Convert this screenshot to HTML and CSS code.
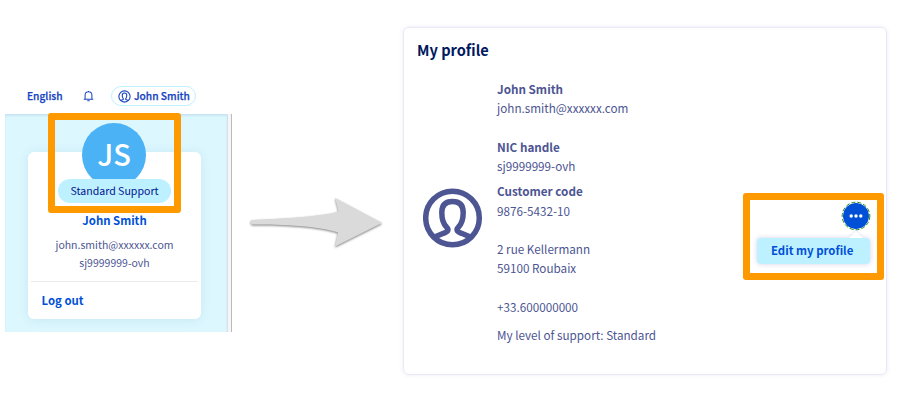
FILE: index.html
```html
<!DOCTYPE html>
<html lang="en">
<head>
<meta charset="utf-8">
<title>My profile</title>
<link rel="stylesheet" href="styles.css">
</head>
<body>
<main class="page">
  <section class="account">
    <header class="topbar">
      <span class="lang">English</span>
      <svg class="bell" viewBox="0 0 12 12"><path d="M.8 9.500h10.400M2.300 9.300V5a3.700 3.700 0 0 1 7.400 0v4.300M6 1.500V.5M4.700 11.300h2.600"/></svg>
      <span class="user"><svg class="user-icon" viewBox="0 0 60 60"><circle cx="30" cy="30" r="26"/><path d="M12 49l9-3.700q6-2.500 3-6C20 35 19.500 31 19.500 24.500C19.500 17 23 13.500 30 13.500S40.500 17 40.500 24.500C40.500 31 40 35 36 39.500q-3 3.500 3 5.800l9 3.700"/></svg><span class="user-name">John Smith</span></span>
    </header>
    <div class="sidebar">
      <div class="sidebar-body">
        <div class="card">
          <div class="avatar">JS</div>
          <div class="badge"><span class="badge-text">Standard Support</span></div>
          <div class="card-name"><span>John Smith</span></div>
          <div class="card-line"><span>john.smith@xxxxxx.com</span></div>
          <div class="card-line"><span>sj9999999-ovh</span></div>
          <div class="logout"><span>Log out</span></div>
        </div>
      </div>
      <div class="scroll"></div>
    </div>
    <div class="highlight highlight-support"></div>
  </section>
  <svg class="arrow" viewBox="0 0 140 60"><path d="M6 27.500Q5 30 7 31.500C40 31.500 72 33 93 39.500L90 53.500L137 30L90 5L93.500 18Q90 20 80 21.500Q55 25 7 27Z"/></svg>
  <section class="profile">
    <h1><span>My profile</span></h1>
    <div class="profile-body">
      <svg class="profile-icon" viewBox="0 0 60 60"><circle cx="29.500" cy="30" r="26.800"/><path d="M11.500 49l9-3.700q7-2.500 3-6.300C19.500 35 18.800 31 18.800 24.500C18.800 17 22.500 13.500 29.500 13.500S40.200 17 40.200 24.500C40.200 31 39.500 35 35.500 39q-4 3.800 3 6.300l9 3.700"/></svg>
      <div class="details">
        <p class="strong"><span>John Smith</span></p>
        <p class="gap-lg"><span>john.smith@xxxxxx.com</span></p>
        <p class="strong"><span>NIC handle</span></p>
        <p class="gap-sm"><span>sj9999999-ovh</span></p>
        <p class="strong code"><span>Customer code</span></p>
        <p class="gap-lg"><span>9876-5432-10</span></p>
        <p><span>2 rue Kellermann</span></p>
        <p class="gap-lg"><span>59100 Roubaix</span></p>
        <p class="gap-md"><span>+33.600000000</span></p>
        <p><span>My level of support: Standard</span></p>
      </div>
    </div>
    <div class="highlight highlight-edit">
      <svg class="more" viewBox="0 0 30 30"><circle class="more-disc" cx="15" cy="15" r="13"/><circle class="more-gap" cx="15" cy="15" r="13.800"/><circle class="more-ring" cx="15" cy="15" r="13.800"/><g class="more-dots"><circle cx="10.200" cy="15" r="1.700"/><circle cx="15" cy="15" r="1.700"/><circle cx="19.800" cy="15" r="1.700"/></g></svg>
      <div class="menu"><span>Edit my profile</span></div>
    </div>
  </section>
</main>
</body>
</html>
```
FILE: styles.css
```css
* { box-sizing: border-box; }
body {
  margin: 0;
  background: #fff;
  font-family: "Noto Sans CJK SC", "Noto Sans", sans-serif;
  font-size: 11.7px;
  color: #4d5592;
}
p, h1 { margin: 0; }
span { white-space: nowrap; }
.page { display: flex; width: 900px; height: 400px; overflow: hidden; }
.account { position: relative; width: 227px; margin: 78px 0 0 5px; flex: none; }
.topbar {
  display: flex;
  align-items: center;
  height: 36px;
  padding-left: 22px;
  color: #1643c0;
  font-size: 10.2px;
  line-height: 16px;
  font-weight: 500;
  -webkit-text-stroke: .25px #1643c0;
}
.lang { width: 56px; padding-bottom: 1px; }
.user-name { padding-bottom: 1px; }
.bell { width: 11px; height: 12px; fill: none; stroke: #1643c0; stroke-width: 1.1; }
.user {
  display: flex;
  align-items: center;
  gap: 3px;
  width: 85px;
  height: 20px;
  margin-left: 17px;
  padding-left: 6px;
  border: 1px solid #bef1ff;
  border-radius: 10px;
}
.user-icon { width: 13px; height: 13px; flex: none; fill: none; stroke: #1643c0; stroke-width: 5; }
.sidebar { display: flex; height: 218px; }
.sidebar-body {
  width: 222px;
  padding: 38px 0 0 23px;
  background: #dcf7fe;
  box-shadow: inset 0 2px 2px rgba(0, 60, 130, .09);
}
.scroll { width: 5px; background: #f5f6f7; border-left: 1px solid #d9dfe2; border-right: 1px solid #bbb; }
.card {
  display: flex;
  flex-direction: column;
  align-items: center;
  width: 173px;
  height: 167px;
  background: #fff;
  border-radius: 6px;
  box-shadow: 0 1px 12px rgba(0, 80, 130, .09);
  font-size: 10.5px;
  line-height: 18px;
}
.avatar {
  flex: none;
  width: 64px;
  height: 64px;
  margin: -29px 1px 0 0;
  border-radius: 50%;
  background: #4bb2f6;
  color: #fff;
  font-size: 29px;
  font-weight: 500;
  line-height: 61px;
  text-align: center;
}
.badge {
  z-index: 1;
  width: 113px;
  height: 24px;
  margin-top: -8px;
  border-radius: 12px;
  background: #bef1ff;
  color: #00138e;
  font-size: 10.6px;
  line-height: 24px;
  text-align: center;
}
.card-name { margin: 8px 0 7px; color: #0050d7; font-size: 11.4px; font-weight: 700; }
.logout {
  width: 167px;
  margin-top: 9px;
  padding: 9px 0 0 10.5px;
  border-top: 1px solid #ebebeb;
  color: #0050d7;
  font-size: 11.4px;
  font-weight: 700;
}
.highlight { position: absolute; border: 7px solid #ff9900; border-radius: 3px; }
.highlight-support { z-index: 2; left: 43px; top: 35px; width: 133px; height: 100px; }
.arrow { width: 140px; height: 60px; margin: 193px 0 0 13px; flex: none; fill: #dadada; filter: drop-shadow(0 1px 1px rgba(0, 0, 0, .5)); }
.profile {
  position: relative;
  flex: none;
  width: 484px;
  height: 348px;
  margin: 27px 0 0 18px;
  padding: 13px 14px 14px 13px;
  border: 1px solid #e9e9f6;
  border-radius: 6px;
  box-shadow: 0 0 4px rgba(80, 80, 180, .1);
}
h1 { color: #00185e; font-size: 14.6px; line-height: 18px; font-weight: 700; }
.profile-body { display: flex; gap: 14px; padding: 20px 0 0 6px; }
.profile-icon { width: 60px; height: 60px; margin-top: 109px; fill: none; stroke: #4d5592; stroke-width: 5.5; }
.details { line-height: 19px; }
.strong { font-weight: 700; }
.code { margin-bottom: 1px; }
.code + .gap-lg { margin-bottom: 19px; }
.gap-lg { margin-bottom: 20px; }
.gap-md { margin-bottom: 9px; }
.gap-sm { margin-bottom: 6px; }
.highlight-edit {
  left: 339px;
  top: 165px;
  width: 141px;
  height: 87px;
  padding: 1px 6px 0 7px;
}
.more { display: block; width: 30px; height: 30px; margin-left: 84px; }
.more-disc { fill: #0050d7; }
.more-gap { fill: none; stroke: #fff; stroke-width: 1; }
.more-ring { fill: none; stroke: #26861e; stroke-width: 1; stroke-dasharray: 4 2; }
.more-dots { fill: #fff; }
.menu {
  width: 113px;
  height: 26px;
  margin-top: 7px;
  padding-left: 14px;
  border-radius: 4px;
  background: #bef1ff;
  box-shadow: 0 0 5px rgba(50, 50, 160, .22);
  color: #0050d7;
  font-size: 11.4px;
  font-weight: 700;
  line-height: 25px;
}
.menu::before {
  content: "";
  position: absolute;
  left: 99px;
  top: 31px;
  border: 7px solid transparent;
  border-top: 0;
  border-bottom-color: #fff;
  filter: drop-shadow(0 -1px 1px rgba(80, 80, 180, .15));
}
```
